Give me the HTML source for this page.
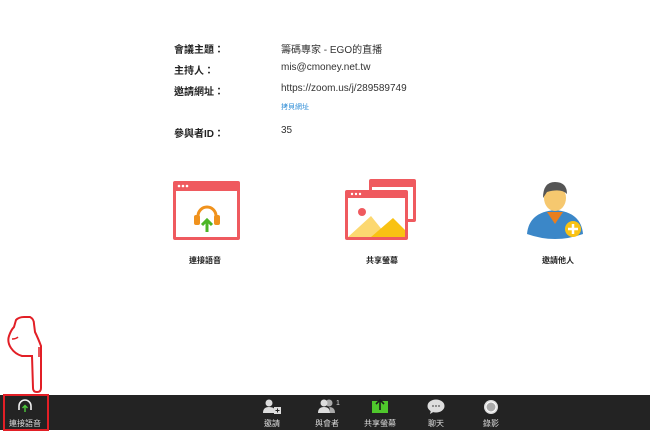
<!DOCTYPE html>
<html><head><meta charset="utf-8"><style>
body{margin:0;width:650px;height:430px;background:#fff;position:relative;overflow:hidden;font-family:"Liberation Sans","Noto Sans CJK TC",sans-serif;}
.a{position:absolute;white-space:nowrap}
.l{font-size:10px;color:#222;font-weight:bold;left:174px}
.v{font-size:10px;color:#333;left:281px}
.lab{font-size:8px;color:#222;font-weight:bold}
.bar{position:absolute;left:0;top:395px;width:650px;height:35px;background:#232323}
.t{position:absolute;top:418px;font-size:8px;color:#ddd;transform:translateX(-50%)}
</style></head><body>
<div class="a l" style="top:41px">會議主題：</div><div class="a v" style="top:41px">籌碼專家 - EGO的直播</div>
<div class="a l" style="top:62px">主持人：</div><div class="a v" style="top:62px">mis@cmoney.net.tw</div>
<div class="a l" style="top:83px">邀請網址：</div><div class="a v" style="top:83px">https://zoom.us/j/289589749</div>
<div class="a" style="top:102px;left:281px;font-size:7px;color:#2d8cd6">拷貝網址</div>
<div class="a l" style="top:125px">參與者ID：</div><div class="a v" style="top:125px">35</div>

<svg class="a" style="left:170px;top:178px" width="75" height="66">
<rect x="3" y="3" width="67" height="59" rx="2" fill="#ef5a5f"/>
<rect x="6" y="13" width="61" height="46" fill="#fff"/>
<circle cx="9" cy="8" r="1.3" fill="#fff"/><circle cx="13" cy="8" r="1.3" fill="#fff"/><circle cx="17" cy="8" r="1.3" fill="#fff"/>
<path d="M28 44 V38 a9 9 0 0 1 18 0 V44" fill="none" stroke="#f0921d" stroke-width="3"/>
<rect x="24" y="37" width="6" height="10" rx="2" fill="#f0921d"/><rect x="44" y="37" width="6" height="10" rx="2" fill="#f0921d"/>
<path d="M37 54 V43 M32 47 l5-5 5 5" fill="none" stroke="#4cb526" stroke-width="3"/>
</svg>
<div class="a lab" style="left:189px;top:255px">連接語音</div>

<svg class="a" style="left:343px;top:178px" width="80" height="66">
<rect x="26" y="1" width="47" height="43" rx="2" fill="#ef5a5f"/><rect x="29" y="9" width="41" height="32" fill="#fff"/>
<rect x="2" y="12" width="63" height="50" rx="2" fill="#ef5a5f"/><rect x="5" y="20" width="57" height="39" fill="#fff"/>
<circle cx="9" cy="16" r="1.2" fill="#fff"/><circle cx="13" cy="16" r="1.2" fill="#fff"/><circle cx="17" cy="16" r="1.2" fill="#fff"/>
<circle cx="19" cy="34" r="4" fill="#ef5a5f"/>
<path d="M5 59 L28 38 L45 59Z" fill="#fcd870"/><path d="M28 59 L50 40 L62 52 V59Z" fill="#f9c213"/>
</svg>
<div class="a lab" style="left:366px;top:255px">共享螢幕</div>

<svg class="a" style="left:525px;top:176px" width="66" height="70">
<path d="M2 58 Q4 36 30 34 Q56 36 58 58 Q30 68 2 58Z" fill="#3b87c8"/>
<path d="M22 36 L30 48 L38 36Z" fill="#e87e1e"/>
<ellipse cx="30" cy="22" rx="11" ry="13" fill="#f6c86f"/>
<path d="M18 22 Q18 6 30 6 Q42 6 42 18 Q36 12 22 16 Z" fill="#555"/>
<circle cx="48" cy="53" r="8" fill="#f9c213"/><path d="M48 48 V58 M43 53 H53" stroke="#fff" stroke-width="2.5"/>
</svg>
<div class="a lab" style="left:542px;top:255px">邀請他人</div>

<svg class="a" style="left:0;top:312px" width="50" height="84">
<path d="M33 76 L32 44 L22 44 Q15 42 11 36 Q7 30 9 24 Q11 18 14 15 L16 8 Q19 5 24 5 L30 5 Q34 7 34 12 L35 20 Q38 26 41 34 L41 76 Q41 80 37 80 Q33 80 33 76Z" fill="none" stroke="#e21f26" stroke-width="2"/>
<path d="M39 35 L39 45 M12 27 Q16 27 18 25" fill="none" stroke="#e21f26" stroke-width="1.5"/>
</svg>

<div class="bar"></div>
<div class="a" style="left:3px;top:394px;width:42px;height:33px;border:2px solid #e21f26"></div>
<svg class="a" style="left:16px;top:398px" width="18" height="16"><path d="M3 12 V8 a6 6 0 0 1 12 0 V12" fill="none" stroke="#eee" stroke-width="1.6"/><path d="M9 14 V8 M6.5 10 l2.5-2.5 2.5 2.5" stroke="#4cc93a" stroke-width="1.4" fill="none"/></svg>
<div class="t" style="left:25px">連接語音</div>

<svg class="a" style="left:262px;top:399px" width="20" height="16"><circle cx="7" cy="4" r="3.5" fill="#ddd"/><path d="M1 14 Q1 8 7 8 Q12 8 13 11 V14Z" fill="#ddd"/><rect x="12" y="8" width="7" height="7" fill="#ddd"/><path d="M15.5 9.5 v4 M13.5 11.5 h4" stroke="#232323"/></svg>
<div class="t" style="left:272px">邀請</div>
<svg class="a" style="left:316px;top:398px" width="26" height="16"><circle cx="13" cy="5" r="3.5" fill="#aaa"/><circle cx="8" cy="5" r="3.5" fill="#ddd"/><path d="M2 15 Q2 9 8 9 Q14 9 14 15Z" fill="#ddd"/><path d="M14 15 Q14 10 13 9 Q19 9 19 15Z" fill="#aaa"/><text x="20" y="7" font-size="7" fill="#ddd" font-family="Liberation Sans">1</text></svg>
<div class="t" style="left:327px">與會者</div>
<svg class="a" style="left:371px;top:398px" width="18" height="16"><rect x="1" y="3" width="16" height="12" fill="#4fc72c"/><path d="M9 12 V2 M5 6 l4-4 4 4" stroke="#1a1a1a" stroke-width="1.6" fill="none"/></svg>
<div class="t" style="left:380px">共享螢幕</div>
<svg class="a" style="left:427px;top:399px" width="18" height="16"><ellipse cx="9" cy="7" rx="8.5" ry="6.5" fill="#ddd"/><path d="M4 11 L3 15 L8 12Z" fill="#ddd"/><circle cx="6" cy="7" r="0.9" fill="#555"/><circle cx="9" cy="7" r="0.9" fill="#555"/><circle cx="12" cy="7" r="0.9" fill="#555"/></svg>
<div class="t" style="left:436px">聊天</div>
<svg class="a" style="left:483px;top:399px" width="16" height="16"><circle cx="8" cy="8" r="7" fill="#ddd"/><circle cx="8" cy="8" r="5" fill="#aaa" stroke="#fff"/></svg>
<div class="t" style="left:491px">錄影</div>
</body></html>
